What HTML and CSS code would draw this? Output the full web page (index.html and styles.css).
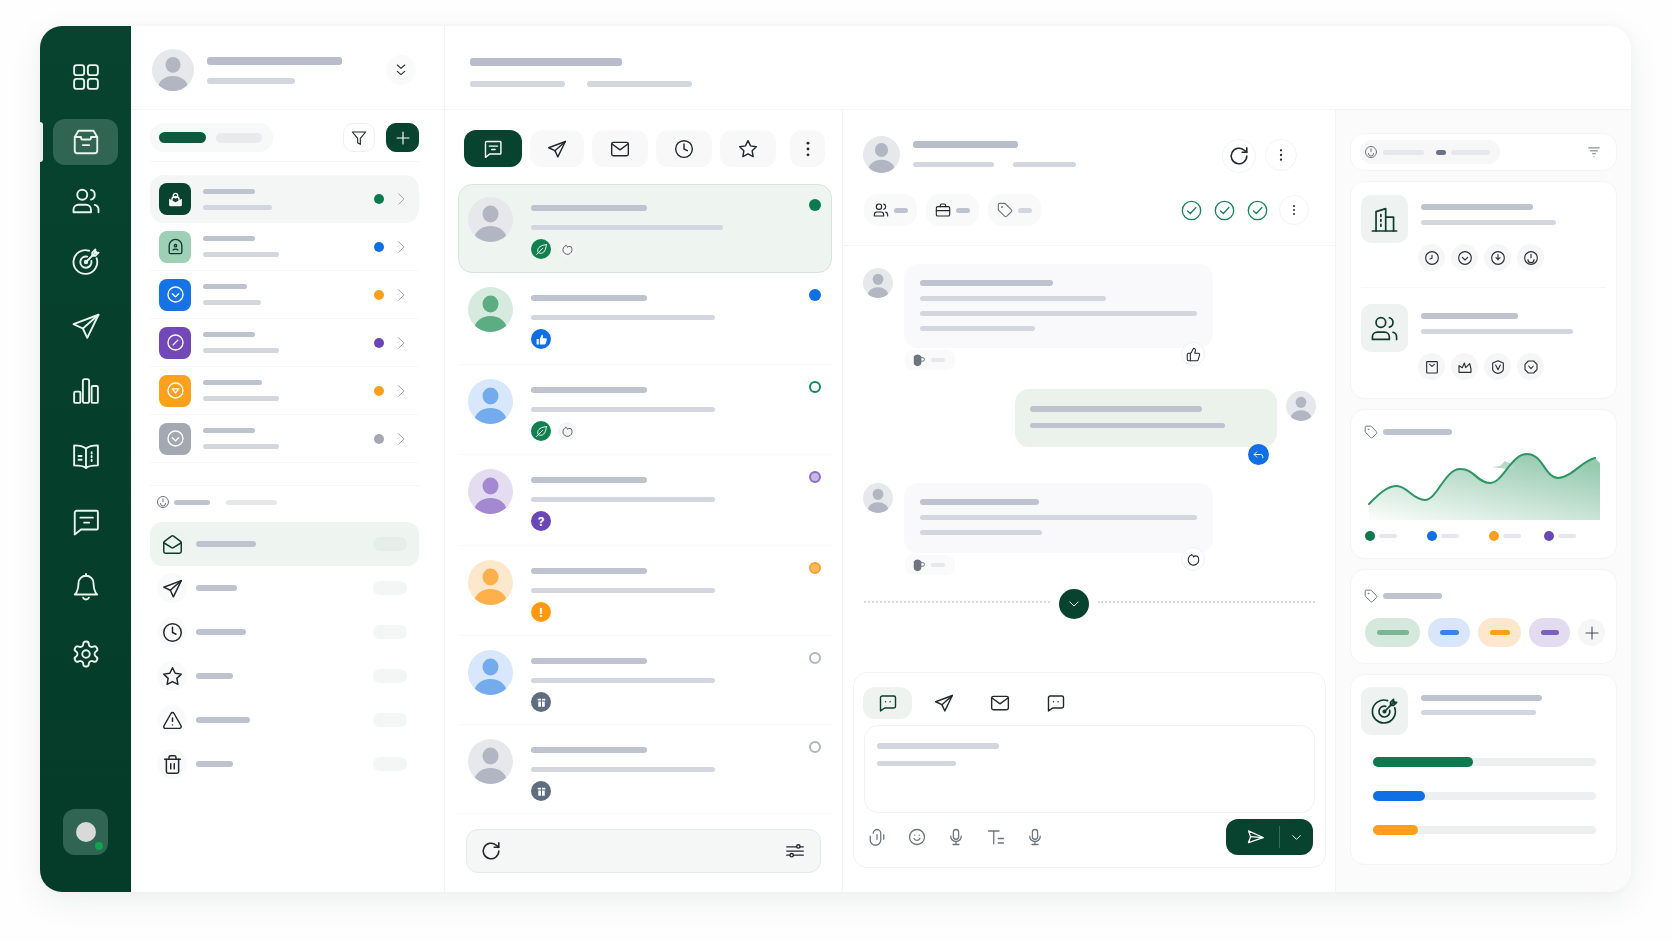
FILE: index.html
```html
<!DOCTYPE html>
<html lang="en">
<head>
  <meta charset="UTF-8">
  <title>Inbox</title>
  <link rel="stylesheet" href="styles.css">
</head>
<body>

<svg class="sprite" xmlns="http://www.w3.org/2000/svg">
  <symbol id="i-grid" viewBox="0 0 24 24"><rect x="2.500" y="2.500" width="8" height="8" rx="2"/><rect x="13.500" y="2.500" width="8" height="8" rx="2"/><rect x="2.500" y="13.500" width="8" height="8" rx="2"/><rect x="13.500" y="13.500" width="8" height="8" rx="2"/></symbol>
  <symbol id="i-inbox" viewBox="0 0 24 24"><path d="M6 3h12l3 5v11a2 2 0 0 1-2 2H5a2 2 0 0 1-2-2V8z"/><path d="M3 8h5v.5A1.500 1.500 0 0 0 9.500 10h5A1.500 1.500 0 0 0 16 8.500V8h5"/><path d="M9.500 14.500h5"/></symbol>
  <symbol id="i-users" viewBox="0 0 24 24"><path d="M16 21v-2a4 4 0 0 0-4-4H6a4 4 0 0 0-4 4v2z"/><circle cx="9" cy="7" r="4"/><path d="M22 21v-2a4 4 0 0 0-3-3.870"/><path d="M16 3.130a4 4 0 0 1 0 7.750"/></symbol>
  <symbol id="i-target" viewBox="0 0 24 24"><path d="M20.500 9a9.500 9.500 0 1 1-6-6"/><path d="M16.300 11a4.500 4.500 0 1 1-3.300-3.300"/><circle cx="12" cy="12" r="1"/><path d="M12 12l8-8"/><path d="M17 4.500V7h2.500L22 4.500h-2.500V2z"/></symbol>
  <symbol id="i-send" viewBox="0 0 24 24"><path d="M22 3 2 10.500l7.500 3.500 3.500 7.500z"/><path d="M9.500 14 22 3"/></symbol>
  <symbol id="i-bars" viewBox="0 0 24 24"><rect x="2.500" y="12.500" width="5" height="9" rx="1"/><rect x="9.500" y="2.500" width="5" height="19" rx="1.500"/><rect x="16.500" y="8" width="5" height="13.500" rx="1"/></symbol>
  <symbol id="i-book" viewBox="0 0 24 24"><path d="M12 6C10 4.300 7 3.500 2.500 3.500v16c4.500 0 7.500.5 9.500 2 2-1.500 5-2 9.500-2v-16C17 3.500 14 4.300 12 6z"/><path d="M12 6v15.500"/><path d="M6 12h2.500M6 15h2.500M16.500 9v1M16.500 12v1M16.500 15v1"/></symbol>
  <symbol id="i-chat" viewBox="0 0 24 24"><path d="M4.500 3h16a1 1 0 0 1 1 1v13a1 1 0 0 1-1 1H8l-5 4V4.500A1.500 1.500 0 0 1 4.500 3z"/><path d="M7.500 8.500h10M10.500 12.500h4"/></symbol>
  <symbol id="i-chat-eyes" viewBox="0 0 24 24"><path d="M5 3.500h14a2 2 0 0 1 2 2V16a2 2 0 0 1-2 2H8l-5 3.500V5.500a2 2 0 0 1 2-2z"/><path d="M9 10.500h.01M14.500 10.500h.01"/></symbol>
  <symbol id="i-bell" viewBox="0 0 24 24"><path d="M6 9a6 6 0 0 1 12 0c0 7 3 9 3 9H3s3-2 3-9"/><path d="M9.700 20.500a2.500 2.500 0 0 0 4.600 0"/><path d="M12 3V1.500"/></symbol>
  <symbol id="i-gear" viewBox="0 0 24 24"><path d="M12.220 2h-.44a2 2 0 0 0-2 2v.18a2 2 0 0 1-1 1.730l-.43.25a2 2 0 0 1-2 0l-.15-.08a2 2 0 0 0-2.730.73l-.22.38a2 2 0 0 0 .73 2.730l.15.1a2 2 0 0 1 1 1.720v.51a2 2 0 0 1-1 1.740l-.15.09a2 2 0 0 0-.73 2.730l.22.38a2 2 0 0 0 2.730.73l.15-.08a2 2 0 0 1 2 0l.43.25a2 2 0 0 1 1 1.730V20a2 2 0 0 0 2 2h.44a2 2 0 0 0 2-2v-.18a2 2 0 0 1 1-1.730l.43-.25a2 2 0 0 1 2 0l.15.08a2 2 0 0 0 2.730-.73l.22-.39a2 2 0 0 0-.73-2.730l-.15-.08a2 2 0 0 1-1-1.740v-.5a2 2 0 0 1 1-1.740l.15-.09a2 2 0 0 0 .73-2.730l-.22-.38a2 2 0 0 0-2.730-.73l-.15.08a2 2 0 0 1-2 0l-.43-.25a2 2 0 0 1-1-1.730V4a2 2 0 0 0-2-2z"/><circle cx="12" cy="12" r="3"/></symbol>
  <symbol id="i-chevrons" viewBox="0 0 24 24"><path d="m6.500 4.500 5.500 5 5.500-5"/><path d="m6.500 14 5.500 5 5.500-5"/></symbol>
  <symbol id="i-right" viewBox="0 0 24 24"><path d="m8 3 9 9-9 9"/></symbol>
  <symbol id="i-down" viewBox="0 0 24 24"><path d="m5 8.500 7 7 7-7"/></symbol>
  <symbol id="i-filter" viewBox="0 0 24 24"><path d="M22 3H2l8 9.500V19l4 2.500v-9z"/></symbol>
  <symbol id="i-plus" viewBox="0 0 24 24"><path d="M12 3v18M3 12h18"/></symbol>
  <symbol id="i-mail-open" viewBox="0 0 24 24"><path d="M21.200 8.400c.5.38.8.97.8 1.600v10a2 2 0 0 1-2 2H4a2 2 0 0 1-2-2V10a2 2 0 0 1 .8-1.600l8-6a2 2 0 0 1 2.400 0z"/><path d="m22 10-8.970 5.700a1.940 1.940 0 0 1-2.060 0L2 10"/></symbol>
  <symbol id="i-clock" viewBox="0 0 24 24"><circle cx="12" cy="12" r="10"/><path d="M12 6v6l4 2"/></symbol>
  <symbol id="i-star" viewBox="0 0 24 24"><path d="m12 2 3.090 6.260L22 9.270l-5 4.870 1.180 6.880L12 17.770l-6.180 3.250L7 14.140 2 9.270l6.910-1.010z"/></symbol>
  <symbol id="i-warn" viewBox="0 0 24 24"><path d="m21.730 18-8-14a2 2 0 0 0-3.480 0l-8 14A2 2 0 0 0 4 21h16a2 2 0 0 0 1.730-3z"/><path d="M12 9v4M12 17h.01"/></symbol>
  <symbol id="i-trash" viewBox="0 0 24 24"><path d="M3 6h18"/><path d="M19 6v14a2 2 0 0 1-2 2H7a2 2 0 0 1-2-2V6"/><path d="M8 6V4a2 2 0 0 1 2-2h4a2 2 0 0 1 2 2v2"/><path d="M10 11v6M14 11v6"/></symbol>
  <symbol id="i-mail" viewBox="0 0 24 24"><rect x="2" y="4" width="20" height="16" rx="2"/><path d="m2.500 6 9.500 7 9.500-7"/></symbol>
  <symbol id="i-refresh" viewBox="0 0 24 24"><path d="M20.500 12a8.500 8.500 0 1 1-2.800-6.300L20.500 8"/><path d="M20.500 3v5h-5"/></symbol>
  <symbol id="i-sliders" viewBox="0 0 24 24"><path d="M2 7h20M2 12h20M2 17h20" stroke-width="1.500"/><circle cx="16" cy="6.500" r="2" class="hole"/><circle cx="8" cy="17" r="2" class="hole"/></symbol>
  <symbol id="i-dots" viewBox="0 0 24 24"><circle cx="12" cy="5" r="1.700" class="solid"/><circle cx="12" cy="12" r="1.700" class="solid"/><circle cx="12" cy="19" r="1.700" class="solid"/></symbol>
  <symbol id="i-bag" viewBox="0 0 24 24"><rect x="2" y="7" width="20" height="14" rx="2"/><path d="M16 7V5a2 2 0 0 0-2-2h-4a2 2 0 0 0-2 2v2"/><path d="M2 13h20"/></symbol>
  <symbol id="i-tag" viewBox="0 0 24 24"><path d="M12.590 2.590A2 2 0 0 0 11.170 2H4a2 2 0 0 0-2 2v7.170a2 2 0 0 0 .59 1.420l8.700 8.700a2.430 2.430 0 0 0 3.420 0l6.580-6.580a2.430 2.430 0 0 0 0-3.420z"/><circle cx="7.500" cy="7.500" r=".6"/></symbol>
  <symbol id="i-check" viewBox="0 0 24 24"><circle cx="12" cy="12" r="10.500"/><path d="m7.500 12.500 3.200 3L17 8.500"/></symbol>
  <symbol id="i-thumb" viewBox="0 0 24 24"><path d="M7 10v12"/><path d="M15 5.880 14 10h5.830a2 2 0 0 1 1.920 2.560l-2.330 8A2 2 0 0 1 17.500 22H4a2 2 0 0 1-2-2v-8a2 2 0 0 1 2-2h2.760a2 2 0 0 0 1.790-1.110L12 2a3.130 3.130 0 0 1 3 3.880z"/></symbol>
  <symbol id="i-thumb-solid" viewBox="0 0 24 24"><path class="solid" d="M3 11h4v10H3zM9 21V11l3.500-8c1.600 0 2.500 1.300 2.200 3L14.500 9.500H20a2 2 0 0 1 1.900 2.500l-2 7.500A2 2 0 0 1 18 21z"/></symbol>
  <symbol id="i-blob" viewBox="0 0 24 24"><path d="M9 4.500a8.500 8.500 0 1 0 9.500 2.500"/><path d="M9 4.500c2 .5 3 1.800 3 3.500 1.500-1.800 3.500-2.500 6.500-1"/></symbol>
  <symbol id="i-leaf" viewBox="0 0 24 24"><path d="M21 3C11 4 5 8 5 14c0 1.500.5 3 1.500 4 1 .8 2.500 1 4 1 6 0 9.500-6 10.500-16z"/><path d="M3 21 14 10"/></symbol>
  <symbol id="i-gift" viewBox="0 0 24 24"><path class="solid" d="M6 10h5v10H7a1 1 0 0 1-1-1zM13 10h5v9a1 1 0 0 1-1 1h-4zM5 5h6v3.500H5zM13 5h6v3.500h-6z"/></symbol>
  <symbol id="i-reply" viewBox="0 0 24 24"><path d="M9 17 4 12l5-5"/><path d="M4 12h12a4 4 0 0 1 4 4v2"/></symbol>
  <symbol id="i-mug" viewBox="0 0 24 24"><path class="solid" d="M3 6a8 8 0 0 1 13 0v10a6 6 0 0 1-13 0z"/><path d="M16 8h2.500a3 3 0 0 1 0 6H16"/></symbol>
  <symbol id="i-clip" viewBox="0 0 24 24"><path d="M7 7a5 5 0 0 1 10 0v9a7 7 0 0 1-14 0v-5"/><path d="M12 9v6"/><path d="M21 9v6"/></symbol>
  <symbol id="i-smile" viewBox="0 0 24 24"><circle cx="12" cy="12" r="10"/><path d="M8 14s1.500 2.500 4 2.500 4-2.500 4-2.500M9 9.500h.01M15 9.500h.01"/></symbol>
  <symbol id="i-mic" viewBox="0 0 24 24"><rect x="8.500" y="2" width="7" height="13" rx="3.500"/><path d="M19 11a7 7 0 0 1-14 0M12 18v4M8 22h8"/></symbol>
  <symbol id="i-text" viewBox="0 0 24 24"><path d="M2 4h14M9 4v17M15 14h7M15 20h7"/></symbol>
  <symbol id="i-building" viewBox="0 0 24 24"><path d="M2 21.500h20"/><path d="M5 21.500V5.500L13 3v18.500"/><path d="M13 10h6.500v11.500"/><path d="M9 8v1.500M9 12v1.500M9 16v1.500"/></symbol>
  <symbol id="i-lines" viewBox="0 0 24 24"><path d="M3 5h18M6 10h12M9.500 15h5M12 20h.01"/></symbol>
  <symbol id="i-letter" viewBox="0 0 24 24"><path class="solid" d="M4 11l3 1.500 5 3 5-3 3-1.500v8a1.500 1.500 0 0 1-1.500 1.500h-13A1.500 1.500 0 0 1 4 19z"/><circle cx="12" cy="7" r="2.800"/><path d="M7.500 13v-1.500a4.500 3 0 0 1 9 0V13"/></symbol>
  <symbol id="i-arch" viewBox="0 0 24 24"><path d="M6 21a2 2 0 0 1-2-2v-8a8 8 0 0 1 16 0v8a2 2 0 0 1-2 2z"/><circle cx="12" cy="11" r="1.500"/><path d="M9 16.500c.5-1.500 5.500-1.500 6 0"/></symbol>
  <symbol id="c-chev" viewBox="0 0 24 24"><circle cx="12" cy="12" r="9.500"/><path d="m8 11 4 4 4-4"/></symbol>
  <symbol id="c-gauge" viewBox="0 0 24 24"><circle cx="12" cy="12" r="9.500"/><path d="m9 15 6-6"/></symbol>
  <symbol id="c-wifi" viewBox="0 0 24 24"><circle cx="12" cy="12" r="9.500"/><path d="M8 10h8l-4 5z"/></symbol>
  <symbol id="c-time" viewBox="0 0 24 24"><circle cx="12" cy="12" r="9.500"/><path d="M12 8v4.500l-3 1"/></symbol>
  <symbol id="c-drop" viewBox="0 0 24 24"><circle cx="12" cy="12" r="9.500"/><path d="M12 7v7M9 11.500l3 3 3-3"/></symbol>
  <symbol id="c-up" viewBox="0 0 24 24"><circle cx="12" cy="12" r="9.500"/><path d="M7.500 14.500a4.500 4.500 0 0 0 9 0M12 6.500v5"/></symbol>
  <symbol id="c-clipboard" viewBox="0 0 24 24"><path d="M5 4h14a1 1 0 0 1 1 1v15a1 1 0 0 1-1 1H5a1 1 0 0 1-1-1V5a1 1 0 0 1 1-1z"/><path d="m8.500 8 3.500 3 3.500-3"/></symbol>
  <symbol id="c-spark" viewBox="0 0 24 24"><path d="M3 20V10l5 3 3-7 2 7 6-6 2 8v5z"/></symbol>
  <symbol id="c-shield" viewBox="0 0 24 24"><path d="M12 2.500 20 6v9c0 3-3 5.500-8 6.500-5-1-8-3.500-8-6.500V6z"/><path d="m8.500 9 3.500 7 3.500-7"/></symbol>
  <symbol id="c-hex" viewBox="0 0 24 24"><path d="M8 3h8l5 5v8l-5 5H8l-5-5V8z"/><path d="m8.500 10.500 3.500 4 3.500-4"/></symbol>
  <symbol id="avatar" viewBox="0 0 45 45"><ellipse class="solid" cx="22.500" cy="17" rx="8" ry="8.500"/><ellipse class="solid" cx="22.500" cy="41.500" rx="16" ry="12.500"/></symbol>
</svg>

<div class="app">
  <aside class="rail">
    <nav class="rail-nav">
      <a class="rail-item"><svg class="ic"><use href="#i-grid"/></svg></a>
      <a class="rail-item active"><svg class="ic"><use href="#i-inbox"/></svg></a>
      <a class="rail-item"><svg class="ic"><use href="#i-users"/></svg></a>
      <a class="rail-item"><svg class="ic"><use href="#i-target"/></svg></a>
      <a class="rail-item"><svg class="ic"><use href="#i-send"/></svg></a>
      <a class="rail-item"><svg class="ic"><use href="#i-bars"/></svg></a>
      <a class="rail-item"><svg class="ic"><use href="#i-book"/></svg></a>
      <a class="rail-item"><svg class="ic"><use href="#i-chat"/></svg></a>
      <a class="rail-item"><svg class="ic"><use href="#i-bell"/></svg></a>
      <a class="rail-item"><svg class="ic"><use href="#i-gear"/></svg></a>
    </nav>
    <div class="rail-user"><span class="rail-face"></span><span class="rail-online"></span></div>
  </aside>

  <section class="folders">
    <header class="folders-head">
      <span class="avatar a42 grey"><svg><use href="#avatar"/></svg></span>
      <div class="stack gap12">
        <span class="bar dark h8 w135"></span>
        <span class="bar h6 w88"></span>
      </div>
      <span class="round-btn"><svg class="ic16"><use href="#i-chevrons"/></svg></span>
    </header>

    <div class="folders-body">
      <div class="tool-row">
        <div class="seg">
          <span class="seg-on"></span>
          <span class="seg-off"></span>
        </div>
        <span class="square-btn"><svg class="ic16"><use href="#i-filter"/></svg></span>
        <span class="square-btn primary"><svg class="ic16"><use href="#i-plus"/></svg></span>
      </div>

      <ul class="groups">
        <li class="group on">
          <span class="tile t-dark"><svg class="ic19"><use href="#i-letter"/></svg></span>
          <div class="stack gap11"><span class="bar mid w52"></span><span class="bar w69"></span></div>
          <span class="dot green"></span><svg class="chev"><use href="#i-right"/></svg>
        </li>
        <li class="group">
          <span class="tile t-mint"><svg class="ic19"><use href="#i-arch"/></svg></span>
          <div class="stack gap11"><span class="bar mid w52"></span><span class="bar w76"></span></div>
          <span class="dot blue"></span><svg class="chev"><use href="#i-right"/></svg>
        </li>
        <li class="group">
          <span class="tile t-blue"><svg class="ic19"><use href="#c-chev"/></svg></span>
          <div class="stack gap11"><span class="bar mid w44"></span><span class="bar w58"></span></div>
          <span class="dot orange"></span><svg class="chev"><use href="#i-right"/></svg>
        </li>
        <li class="group">
          <span class="tile t-purple"><svg class="ic19"><use href="#c-gauge"/></svg></span>
          <div class="stack gap11"><span class="bar mid w52"></span><span class="bar w76"></span></div>
          <span class="dot purple"></span><svg class="chev"><use href="#i-right"/></svg>
        </li>
        <li class="group">
          <span class="tile t-orange"><svg class="ic19"><use href="#c-wifi"/></svg></span>
          <div class="stack gap11"><span class="bar mid w59"></span><span class="bar w76"></span></div>
          <span class="dot orange"></span><svg class="chev"><use href="#i-right"/></svg>
        </li>
        <li class="group">
          <span class="tile t-grey"><svg class="ic19"><use href="#c-chev"/></svg></span>
          <div class="stack gap11"><span class="bar mid w52"></span><span class="bar w76"></span></div>
          <span class="dot grey-dot"></span><svg class="chev"><use href="#i-right"/></svg>
        </li>
      </ul>

      <div class="sub-head">
        <svg class="ic14 soft"><use href="#c-up"/></svg>
        <span class="bar mid w36"></span>
        <span class="bar pale w51"></span>
      </div>

      <ul class="folders-list">
        <li class="folder on"><span class="folder-ic"><svg class="ic21"><use href="#i-mail-open"/></svg></span><span class="bar mid h6 w60"></span><span class="count"></span></li>
        <li class="folder"><span class="folder-ic"><svg class="ic21"><use href="#i-send"/></svg></span><span class="bar mid h6 w41"></span><span class="count"></span></li>
        <li class="folder"><span class="folder-ic"><svg class="ic21"><use href="#i-clock"/></svg></span><span class="bar mid h6 w50"></span><span class="count"></span></li>
        <li class="folder"><span class="folder-ic"><svg class="ic21"><use href="#i-star"/></svg></span><span class="bar mid h6 w37"></span><span class="count"></span></li>
        <li class="folder"><span class="folder-ic"><svg class="ic21"><use href="#i-warn"/></svg></span><span class="bar mid h6 w54"></span><span class="count"></span></li>
        <li class="folder"><span class="folder-ic"><svg class="ic21"><use href="#i-trash"/></svg></span><span class="bar mid h6 w37"></span><span class="count"></span></li>
      </ul>
    </div>
  </section>

  <div class="workspace">
    <header class="top">
      <span class="bar dark h8 w152"></span>
      <div class="top-sub"><span class="bar h6 w95"></span><span class="bar h6 w105"></span></div>
    </header>

    <div class="panes">
      <section class="threads">
        <div class="thread-tabs">
          <span class="tab on"><svg class="ic20"><use href="#i-chat"/></svg></span>
          <span class="tab w54"><svg class="ic20"><use href="#i-send"/></svg></span>
          <span class="tab"><svg class="ic20"><use href="#i-mail"/></svg></span>
          <span class="tab"><svg class="ic20"><use href="#i-clock"/></svg></span>
          <span class="tab"><svg class="ic20"><use href="#i-star"/></svg></span>
          <span class="tab more"><svg class="ic20"><use href="#i-dots"/></svg></span>
        </div>

        <ul class="thread-list">
          <li class="thread on">
            <span class="avatar a45 grey"><svg><use href="#avatar"/></svg></span>
            <div class="thread-body">
              <span class="bar mid h6 w116"></span>
              <span class="bar w192"></span>
              <div class="badges"><span class="badge b-green"><svg class="ic13"><use href="#i-leaf"/></svg></span><span class="badge-soft"><svg class="ic13"><use href="#i-blob"/></svg></span></div>
            </div>
            <span class="flag green"></span>
          </li>
          <li class="thread">
            <span class="avatar a45 mint"><svg><use href="#avatar"/></svg></span>
            <div class="thread-body">
              <span class="bar mid h6 w116"></span>
              <span class="bar w184"></span>
              <div class="badges"><span class="badge b-blue"><svg class="ic13"><use href="#i-thumb-solid"/></svg></span></div>
            </div>
            <span class="flag blue"></span>
          </li>
          <li class="thread">
            <span class="avatar a45 sky"><svg><use href="#avatar"/></svg></span>
            <div class="thread-body">
              <span class="bar mid h6 w116"></span>
              <span class="bar w184"></span>
              <div class="badges"><span class="badge b-green"><svg class="ic13"><use href="#i-leaf"/></svg></span><span class="badge-soft"><svg class="ic13"><use href="#i-blob"/></svg></span></div>
            </div>
            <span class="flag ring-green"></span>
          </li>
          <li class="thread">
            <span class="avatar a45 lilac"><svg><use href="#avatar"/></svg></span>
            <div class="thread-body">
              <span class="bar mid h6 w116"></span>
              <span class="bar w184"></span>
              <div class="badges"><span class="badge b-purple">?</span></div>
            </div>
            <span class="flag ring-purple"></span>
          </li>
          <li class="thread">
            <span class="avatar a45 peach"><svg><use href="#avatar"/></svg></span>
            <div class="thread-body">
              <span class="bar mid h6 w116"></span>
              <span class="bar w184"></span>
              <div class="badges"><span class="badge b-orange">!</span></div>
            </div>
            <span class="flag ring-orange"></span>
          </li>
          <li class="thread">
            <span class="avatar a45 sky"><svg><use href="#avatar"/></svg></span>
            <div class="thread-body">
              <span class="bar mid h6 w116"></span>
              <span class="bar w184"></span>
              <div class="badges"><span class="badge b-slate"><svg class="ic13"><use href="#i-gift"/></svg></span></div>
            </div>
            <span class="flag ring-grey"></span>
          </li>
          <li class="thread">
            <span class="avatar a45 grey"><svg><use href="#avatar"/></svg></span>
            <div class="thread-body">
              <span class="bar mid h6 w116"></span>
              <span class="bar w184"></span>
              <div class="badges"><span class="badge b-slate"><svg class="ic13"><use href="#i-gift"/></svg></span></div>
            </div>
            <span class="flag ring-grey"></span>
          </li>
        </ul>

        <div class="search">
          <svg class="ic22"><use href="#i-refresh"/></svg>
          <svg class="ic20"><use href="#i-sliders"/></svg>
        </div>
      </section>

      <section class="chat">
        <header class="chat-head">
          <div class="chat-who">
            <span class="avatar a37 grey"><svg><use href="#avatar"/></svg></span>
            <div class="stack who-text">
              <span class="bar dark h7 w105"></span>
              <div class="who-sub"><span class="bar w81"></span><span class="bar w63"></span></div>
            </div>
            <span class="circle-btn big"><svg class="ic22"><use href="#i-refresh"/></svg></span>
            <span class="circle-btn"><svg class="ic16"><use href="#i-dots"/></svg></span>
          </div>
          <div class="chat-meta">
            <span class="pill"><svg class="ic16"><use href="#i-users"/></svg><i class="bar mid w14"></i></span>
            <span class="pill"><svg class="ic16"><use href="#i-bag"/></svg><i class="bar mid w14"></i></span>
            <span class="pill"><svg class="ic16 soft"><use href="#i-tag"/></svg><i class="bar w14"></i></span>
            <div class="checks">
              <svg class="ic21 tick"><use href="#i-check"/></svg>
              <svg class="ic21 tick"><use href="#i-check"/></svg>
              <svg class="ic21 tick"><use href="#i-check"/></svg>
              <span class="circle-btn small"><svg class="ic14"><use href="#i-dots"/></svg></span>
            </div>
          </div>
        </header>

        <div class="messages">
          <div class="msg">
            <span class="avatar a30 grey"><svg><use href="#avatar"/></svg></span>
            <div>
              <div class="bubble b-in h84">
                <span class="bar mid h6 w133"></span>
                <span class="bar w186"></span>
                <span class="bar w277"></span>
                <span class="bar w115"></span>
                <span class="react-btn"><svg class="ic15"><use href="#i-thumb"/></svg></span>
              </div>
              <div class="react-chip"><svg class="ic14 soft"><use href="#i-mug"/></svg><i class="bar pale h4 w14"></i></div>
            </div>
          </div>

          <div class="msg mine">
            <div class="bubble b-out">
              <span class="bar mid h6 w172"></span>
              <span class="bar mid w195"></span>
              <span class="reply-btn"><svg class="ic13"><use href="#i-reply"/></svg></span>
            </div>
            <span class="avatar a30 grey"><svg><use href="#avatar"/></svg></span>
          </div>

          <div class="msg third">
            <span class="avatar a30 grey"><svg><use href="#avatar"/></svg></span>
            <div>
              <div class="bubble b-in h70">
                <span class="bar mid h6 w119"></span>
                <span class="bar w277"></span>
                <span class="bar w122"></span>
                <span class="react-btn"><svg class="ic15"><use href="#i-blob"/></svg></span>
              </div>
              <div class="react-chip"><svg class="ic14 soft"><use href="#i-mug"/></svg><i class="bar pale h4 w14"></i></div>
            </div>
          </div>

          <div class="jump">
            <span class="jump-line short"></span>
            <span class="jump-btn"><svg class="ic14"><use href="#i-down"/></svg></span>
            <span class="jump-line"></span>
          </div>
        </div>

        <div class="composer">
          <div class="composer-tabs">
            <span class="ctab on"><svg class="ic20"><use href="#i-chat-eyes"/></svg></span>
            <span class="ctab"><svg class="ic20"><use href="#i-send"/></svg></span>
            <span class="ctab"><svg class="ic20"><use href="#i-mail"/></svg></span>
            <span class="ctab"><svg class="ic20"><use href="#i-chat-eyes"/></svg></span>
          </div>
          <div class="field">
            <span class="bar h6 w122"></span>
            <span class="bar w79"></span>
          </div>
          <div class="composer-foot">
            <svg class="ic18 soft"><use href="#i-clip"/></svg>
            <svg class="ic18 soft"><use href="#i-smile"/></svg>
            <svg class="ic18 soft"><use href="#i-mic"/></svg>
            <svg class="ic18 soft"><use href="#i-text"/></svg>
            <svg class="ic18 soft"><use href="#i-mic"/></svg>
            <div class="send">
              <span class="send-main"><svg class="ic18 tilt"><use href="#i-send"/></svg></span>
              <span class="send-more"><svg class="ic13"><use href="#i-down"/></svg></span>
            </div>
          </div>
        </div>
      </section>

      <aside class="details">
        <div class="card filter-card">
          <div class="filter-pill">
            <svg class="ic14 soft"><use href="#c-up"/></svg>
            <span class="bar pale w41"></span>
            <span class="bar slate w10"></span>
            <span class="bar pale w39"></span>
          </div>
          <svg class="ic14 soft"><use href="#i-lines"/></svg>
        </div>

        <div class="card info-card">
          <div class="info-block">
            <span class="big-tile"><svg class="ic29"><use href="#i-building"/></svg></span>
            <div class="stack info-text">
              <span class="bar mid h6 w112"></span>
              <span class="bar w135"></span>
              <div class="mini-row">
                <span class="mini"><svg class="ic16"><use href="#c-time"/></svg></span>
                <span class="mini"><svg class="ic16"><use href="#c-chev"/></svg></span>
                <span class="mini"><svg class="ic16"><use href="#c-drop"/></svg></span>
                <span class="mini"><svg class="ic16"><use href="#c-up"/></svg></span>
              </div>
            </div>
          </div>
          <div class="info-block second">
            <span class="big-tile"><svg class="ic29"><use href="#i-users"/></svg></span>
            <div class="stack info-text">
              <span class="bar mid h6 w97"></span>
              <span class="bar w152"></span>
              <div class="mini-row">
                <span class="mini"><svg class="ic16"><use href="#c-clipboard"/></svg></span>
                <span class="mini"><svg class="ic16"><use href="#c-spark"/></svg></span>
                <span class="mini"><svg class="ic16"><use href="#c-shield"/></svg></span>
                <span class="mini"><svg class="ic16"><use href="#c-hex"/></svg></span>
              </div>
            </div>
          </div>
        </div>

        <div class="card chart-card">
          <div class="card-title"><svg class="ic14 soft"><use href="#i-tag"/></svg><span class="bar mid h6 w69"></span></div>
          <svg class="chart" viewBox="0 0 235 72">
            <defs>
              <linearGradient id="area" x1="0" y1="1" x2="0.75" y2="0">
                <stop offset="0" stop-color="#3f9e6c" stop-opacity=".02"/>
                <stop offset="1" stop-color="#3f9e6c" stop-opacity=".55"/>
              </linearGradient>
            </defs>
            <path class="chart-area" fill="url(#area)" d="M4 56C14 46 22 38 32 38S48 52 60 52 80 21 95 21 112 35 125 35 146 6 162 6 180 30 193 30 218 12 230 10L235 15V72H4Z"/>
            <path class="chart-mark" d="M127 19l8-1 5-5 6 3 4 4-8 1z"/>
            <path class="chart-line" d="M4 56C14 46 22 38 32 38S48 52 60 52 80 21 95 21 112 35 125 35 146 6 162 6 180 30 193 30 218 12 230 10"/>
          </svg>
          <div class="legend">
            <span class="legend-item"><i class="mark green"></i><i class="bar pale h4 w18"></i></span>
            <span class="legend-item"><i class="mark blue"></i><i class="bar pale h4 w18"></i></span>
            <span class="legend-item"><i class="mark orange"></i><i class="bar pale h4 w18"></i></span>
            <span class="legend-item"><i class="mark purple"></i><i class="bar pale h4 w18"></i></span>
          </div>
        </div>

        <div class="card tags-card">
          <div class="card-title"><svg class="ic14 soft"><use href="#i-tag"/></svg><span class="bar mid h6 w59"></span></div>
          <div class="chips">
            <span class="chip c-green w55"><i class="w32"></i></span>
            <span class="chip c-blue w42"><i class="w19"></i></span>
            <span class="chip c-orange w43"><i class="w20"></i></span>
            <span class="chip c-purple w41"><i class="w18"></i></span>
            <span class="chip-add"><svg class="ic16"><use href="#i-plus"/></svg></span>
          </div>
        </div>

        <div class="card goal-card">
          <div class="goal-head">
            <span class="big-tile"><svg class="ic29"><use href="#i-target"/></svg></span>
            <div class="stack goal-text"><span class="bar mid h6 w121"></span><span class="bar w115"></span></div>
          </div>
          <div class="progress"><span class="fill green w100"></span></div>
          <div class="progress"><span class="fill blue w52"></span></div>
          <div class="progress"><span class="fill orange w45"></span></div>
        </div>
      </aside>
    </div>
  </div>
</div>

</body>
</html>
```

FILE: styles.css
```css
* { box-sizing: border-box; margin: 0; padding: 0; }

body {
  background: #fefefe;
  font-family: "Inter", "Liberation Sans", sans-serif;
  height: 941px;
  overflow: hidden;
  padding: 26px 41px 49px 40px;
}

ul { list-style: none; }
i { display: block; }

.sprite { display: none; }

/* svg defaults, line icons */
svg { display: block; fill: none; stroke: currentColor; stroke-width: 1.7; stroke-linecap: round; stroke-linejoin: round; flex: none; }
.solid { fill: currentColor; stroke: none; }
.hole { fill: #f5f6f6; }

.ic { width: 30px; height: 30px; stroke-width: 1.5; }
.ic13 { width: 13px; height: 13px; }
.ic14 { width: 14px; height: 14px; }
.ic15 { width: 15px; height: 15px; }
.ic16 { width: 16px; height: 16px; }
.ic18 { width: 18px; height: 18px; }
.ic19 { width: 19px; height: 19px; }
.ic20 { width: 20px; height: 20px; }
.ic21 { width: 21px; height: 21px; }
.ic22 { width: 22px; height: 22px; }
.ic29 { width: 29px; height: 29px; stroke-width: 1.4; }
.soft { color: #6f7480; }
.tilt { transform: rotate(45deg); }

.app {
  display: flex;
  height: 866px;
  width: 1591px;
  background: #fff;
  border-radius: 22px;
  overflow: hidden;
  box-shadow: 0 10px 34px rgba(30, 40, 60, .07), 0 0 8px rgba(30, 40, 60, .03);
}

/* skeleton text */
.bar { display: block; height: 5px; border-radius: 3px; background: #d4d6df; flex: none; }
.bar.mid { background: #bfc2cf; }
.bar.dark { background: #b9bcca; }
.bar.pale { background: #e6e7ea; }
.bar.slate { background: #6c7388; }
.h4 { height: 4px; }
.h6 { height: 6px; }
.h7 { height: 7px; }
.h8 { height: 8px; }

.w10 { width: 10px; } .w14 { width: 14px; } .w18 { width: 18px; } .w19 { width: 19px; }
.w20 { width: 20px; } .w32 { width: 32px; } .w36 { width: 36px; } .w37 { width: 37px; }
.w39 { width: 39px; } .w41 { width: 41px; } .w42 { width: 42px; } .w43 { width: 43px; }
.w44 { width: 44px; } .w45 { width: 45px; } .w50 { width: 50px; } .w51 { width: 51px; }
.w52 { width: 52px; } .w54 { width: 54px; } .w55 { width: 55px; } .w58 { width: 58px; }
.w59 { width: 59px; } .w60 { width: 60px; } .w63 { width: 63px; } .w69 { width: 69px; }
.w76 { width: 76px; } .w79 { width: 79px; } .w81 { width: 81px; } .w88 { width: 88px; }
.w95 { width: 95px; } .w97 { width: 97px; } .w100 { width: 100px; } .w105 { width: 105px; }
.w112 { width: 112px; } .w115 { width: 115px; } .w116 { width: 116px; } .w119 { width: 119px; }
.w121 { width: 121px; } .w122 { width: 122px; } .w133 { width: 133px; } .w135 { width: 135px; }
.w152 { width: 152px; } .w172 { width: 172px; } .w184 { width: 184px; } .w186 { width: 186px; }
.w192 { width: 192px; } .w195 { width: 195px; } .w277 { width: 277px; }

.stack { display: flex; flex-direction: column; }
.gap11 { gap: 11px; }
.gap12 { gap: 13px; }

/* avatars */
.avatar { display: block; border-radius: 50%; overflow: hidden; flex: none; }
.avatar svg { width: 100%; height: 100%; }
.a30 { width: 30px; height: 30px; }
.a37 { width: 37px; height: 37px; }
.a42 { width: 42px; height: 42px; }
.a45 { width: 45px; height: 45px; }
.avatar.grey { background: #e7e8eb; color: #b2b6c2; }
.avatar.mint { background: #d7eadf; color: #5cad82; }
.avatar.sky { background: #d8e7fb; color: #74abed; }
.avatar.lilac { background: #e4dcf1; color: #a488d2; }
.avatar.peach { background: #fde8cd; color: #ffb04a; }

/* left rail */
.rail {
  width: 91px;
  flex: none;
  display: flex;
  flex-direction: column;
  align-items: center;
  padding: 28px 0 37px;
  background: linear-gradient(180deg, #07432f, #043b29);
  color: #eaf3ee;
  position: relative;
}
.rail-nav {
  display: grid;
  grid-template-rows: 65px 59px 61px 64px 65px 65px 66px 65px 67px 46px;
  justify-items: center;
}
.rail-item {
  width: 65px;
  height: 46px;
  display: flex;
  align-items: center;
  justify-content: center;
  border-radius: 12px;
}
.rail-item.active { background: #2f6552; }
.rail-item.active::before {
  content: "";
  position: absolute;
  left: 0;
  width: 3px;
  height: 40px;
  background: #e9efec;
  border-radius: 0 3px 3px 0;
}
.rail-user {
  margin-top: auto;
  width: 45px;
  height: 46px;
  border-radius: 12px;
  background: #2f6552;
  display: flex;
  align-items: center;
  justify-content: center;
  position: relative;
}
.rail-face { width: 20px; height: 20px; border-radius: 50%; background: #d9d9d9; }
.rail-online {
  position: absolute;
  right: 5px;
  bottom: 5px;
  width: 8px;
  height: 8px;
  border-radius: 50%;
  background: #12a150;
}

/* folders column */
.folders { width: 314px; flex: none; border-right: 1px solid #f2f3f5; }
.folders-head {
  height: 84px;
  display: flex;
  align-items: center;
  gap: 13px;
  padding: 5px 28px 0 21px;
  border-bottom: 1px solid #f3f4f6;
}
.round-btn {
  margin-left: auto;
  width: 30px;
  height: 30px;
  border-radius: 50%;
  background: #fafafb;
  color: #2b2f38;
  display: flex;
  align-items: center;
  justify-content: center;
}
.folders-body { padding: 13px 25px 0 19px; }

.tool-row {
  display: flex;
  gap: 11px;
  padding-bottom: 9px;
  border-bottom: 1px solid #f3f4f6;
}
.seg {
  width: 123px;
  height: 29px;
  margin-right: auto;
  background: #f7f8f8;
  border-radius: 14px;
  display: flex;
  align-items: center;
  gap: 10px;
  padding-left: 9px;
}
.seg-on { width: 47px; height: 11px; border-radius: 6px; background: #0f5a3e; }
.seg-off { width: 46px; height: 10px; border-radius: 5px; background: #e9eaec; }
.square-btn {
  width: 32px;
  height: 29px;
  border-radius: 10px;
  border: 1px solid #f0f0f2;
  background: #fff;
  color: #23272f;
  display: flex;
  align-items: center;
  justify-content: center;
}
.square-btn.primary { width: 33px; background: #07432f; border-color: #07432f; color: #fff; }

.groups { margin-top: 13px; }
.group {
  height: 48px;
  display: flex;
  align-items: center;
  gap: 12px;
  padding: 0 11px 0 9px;
  border-bottom: 1px solid #f7f8f9;
}
.group.on { background: #f4f6f5; border-radius: 14px; border-bottom: 0; }
.group .dot { margin-left: auto; }
.dot { width: 10px; height: 10px; border-radius: 50%; flex: none; }
.chev { width: 14px; height: 14px; margin-left: -2px; color: #9a9da6; stroke-width: 1.6; }

.tile {
  width: 32px;
  height: 32px;
  border-radius: 8px;
  flex: none;
  display: flex;
  align-items: center;
  justify-content: center;
  color: #fff;
}
.t-dark { background: #07432f; }
.t-mint { background: #9fd0b6; color: #0c3b2b; }
.t-blue { background: #1673e6; }
.t-purple { background: #7248b8; }
.t-orange { background: #ffa01e; }
.t-grey { background: #a4a8b3; }

.green { background: #0c7a4d; }
.blue { background: #0f6fe3; }
.orange { background: #ff9f1c; }
.purple { background: #6b46b5; }
.grey-dot { background: #a5a8b3; }

.sub-head {
  margin-top: 22px;
  padding: 9px 0 13px 6px;
  border-top: 1px solid #f3f4f6;
  display: flex;
  align-items: center;
  gap: 4px;
}
.sub-head .bar + .bar { margin-left: 12px; }

.folder {
  height: 44px;
  display: flex;
  align-items: center;
  gap: 9px;
  padding: 0 12px 0 7px;
  border-radius: 12px;
}
.folder.on { background: #eef5f1; }
.folder-ic {
  width: 30px;
  height: 30px;
  border-radius: 50%;
  background: #fafafb;
  color: #23272f;
  display: flex;
  align-items: center;
  justify-content: center;
}
.folder.on .folder-ic { background: #edf4f0; color: #0d3d2c; }
.count { margin-left: auto; width: 34px; height: 14px; border-radius: 7px; background: #f4f5f5; }
.folder.on .count { background: #e4efe9; }

/* main area */
.workspace { flex: 1; display: flex; flex-direction: column; min-width: 0; }
.top { height: 84px; padding: 32px 0 0 25px; border-bottom: 1px solid #f3f4f6; }
.top-sub { display: flex; gap: 22px; margin-top: 15px; }
.panes { flex: 1; display: flex; min-height: 0; }

/* thread list */
.threads {
  width: 398px;
  flex: none;
  display: flex;
  flex-direction: column;
  padding-top: 20px;
  border-right: 1px solid #f2f3f5;
}
.thread-tabs { display: flex; gap: 8px; padding: 0 17px 0 19px; }
.tab {
  width: 56px;
  height: 37px;
  border-radius: 12px;
  background: #f8f8f9;
  color: #23272f;
  display: flex;
  align-items: center;
  justify-content: center;
}
.tab.w54 { width: 54px; }
.tab.on { width: 58px; background: #07432f; color: #fff; }
.tab.more { width: 35px; margin-left: auto; }

.thread-list { margin: 17px 10px 0 13px; }
.thread {
  height: 90px;
  display: flex;
  align-items: flex-start;
  padding: 14px 11px 0 10px;
  border-bottom: 1px solid #f9f9fa;
}
.thread.on {
  height: 89px;
  padding: 12px 10px 0 9px;
  background: #eef4f0;
  border: 1px solid #d5e5dc;
  border-radius: 14px;
}
.thread:nth-child(2) { height: 92px; }
.thread:nth-child(4) { height: 91px; }
.thread:nth-child(6) { height: 89px; }
.thread:nth-child(7) { height: 89px; }
.thread-body { flex: 1; margin-left: 18px; padding-top: 8px; display: flex; flex-direction: column; gap: 14px; }
.badges { display: flex; align-items: center; gap: 7px; margin-top: -5px; }
.badge {
  width: 20px;
  height: 20px;
  border-radius: 50%;
  display: flex;
  align-items: center;
  justify-content: center;
  color: #fff;
  font-size: 12px;
  font-weight: 700;
}
.b-green { background: #11804f; }
.b-blue { background: #0f6fe3; }
.b-purple { background: #6b46b5; }
.b-orange { background: #ff9a0e; }
.b-slate { background: #5f6d80; }
.badge-soft {
  width: 18px;
  height: 18px;
  border-radius: 50%;
  background: #f3f5f4;
  color: #555b63;
  display: flex;
  align-items: center;
  justify-content: center;
}
.flag { width: 12px; height: 12px; border-radius: 50%; margin-top: 2px; flex: none; }
.ring-green { border: 2px solid #14885a; }
.ring-purple { background: #c9b8e6; border: 2px solid #8c6fc8; }
.ring-orange { background: #ffbb5c; border: 2px solid #f9a133; }
.ring-grey { border: 2px solid #b3b6bf; }

.search {
  margin: 15px 21px 0;
  height: 44px;
  display: flex;
  align-items: center;
  justify-content: space-between;
  padding: 0 15px 0 13px;
  background: #f5f6f6;
  border: 1px solid #e6e8e9;
  border-radius: 12px;
  color: #23272f;
}

/* conversation */
.chat { width: 493px; flex: none; display: flex; flex-direction: column; border-right: 1px solid #f2f3f5; }
.chat-head { padding: 26px 26px 19px 20px; border-bottom: 1px solid #f3f4f6; }
.chat-who { display: flex; align-items: flex-start; }
.who-text { margin-left: 13px; margin-right: auto; gap: 14px; padding-top: 5px; }
.who-sub { display: flex; gap: 19px; }
.circle-btn {
  width: 32px;
  height: 32px;
  margin-top: 3px;
  border-radius: 50%;
  background: #fff;
  border: 1px solid #f2f3f4;
  color: #23272f;
  display: flex;
  align-items: center;
  justify-content: center;
  margin-right: 12px;
}
.circle-btn.big { width: 34px; height: 34px; margin-right: 9px; }
.circle-btn.small { width: 30px; height: 30px; margin: 0 0 0 -1px; }

.chat-meta { display: flex; align-items: center; gap: 9px; margin-top: 21px; padding-left: 1px; }
.pill {
  width: 53px;
  height: 32px;
  border-radius: 14px;
  background: #f9f9fa;
  color: #23272f;
  display: flex;
  align-items: center;
  gap: 5px;
  padding-left: 9px;
}
.checks { margin-left: auto; display: flex; align-items: center; gap: 12px; }
.tick { color: #1a8457; stroke-width: 1.5; }

.messages { padding: 18px 20px 0; }
.msg { display: flex; align-items: flex-start; gap: 11px; }
.msg > .avatar { margin-top: 4px; }
.msg.mine { justify-content: flex-end; gap: 9px; margin-top: 19px; margin-right: -1px; }
.msg.mine > .avatar { margin-top: 2px; }
.msg.third { margin-top: 36px; }
.msg.third > .avatar { margin-top: 0; }

.bubble {
  position: relative;
  display: flex;
  flex-direction: column;
  gap: 10px;
  padding: 16px;
  border-radius: 14px;
}
.b-in { width: 309px; background: #f9f9fb; }
.h84 { height: 84px; }
.h70 { height: 70px; }
.b-out { width: 262px; height: 58px; padding: 17px 15px; gap: 10.5px; background: #ebf2ec; }
.react-btn {
  position: absolute;
  right: 8px;
  bottom: -18px;
  width: 24px;
  height: 24px;
  border-radius: 50%;
  background: #fff;
  border: 1px solid #f0f1f2;
  color: #23272f;
  display: flex;
  align-items: center;
  justify-content: center;
}
.reply-btn {
  position: absolute;
  right: 8px;
  bottom: -18px;
  width: 21px;
  height: 21px;
  border-radius: 50%;
  background: #0f6fe3;
  color: #fff;
  display: flex;
  align-items: center;
  justify-content: center;
}
.react-chip {
  width: 50px;
  height: 20px;
  margin: 2px 0 0 1px;
  background: #fafafb;
  border-radius: 8px;
  display: flex;
  align-items: center;
  gap: 5px;
  padding-left: 7px;
}

.jump { display: flex; align-items: center; gap: 9px; margin-top: 14px; padding-left: 1px; }
.jump-line { flex: 1; border-top: 2px dotted #d9dbdf; margin-bottom: 4px; }
.jump-line.short { flex: none; width: 186px; }
.jump-btn {
  width: 30px;
  height: 30px;
  border-radius: 50%;
  background: #07432f;
  color: #fff;
  display: flex;
  align-items: center;
  justify-content: center;
}

.composer {
  margin: auto 9px 24px 10px;
  height: 196px;
  padding: 14px 10px 0;
  border: 1px solid #f1f2f3;
  border-radius: 14px;
  background: #fff;
}
.composer-tabs { display: flex; gap: 7px; margin-left: -1px; }
.ctab {
  width: 49px;
  height: 32px;
  border-radius: 12px;
  color: #23272f;
  display: flex;
  align-items: center;
  justify-content: center;
}
.ctab.on { background: #eef3f0; color: #0d3d2c; }
.field {
  height: 88px;
  margin-top: 6px;
  padding: 17px 12px;
  border: 1px solid #f1f2f3;
  border-radius: 14px;
  display: flex;
  flex-direction: column;
  gap: 12px;
}
.composer-foot { display: flex; align-items: center; gap: 21.500px; height: 36px; margin-top: 6px; padding-left: 4px; }
.send {
  margin-left: auto;
  margin-right: 2px;
  width: 87px;
  height: 36px;
  border-radius: 12px;
  background: #07432f;
  color: #fff;
  display: flex;
  align-items: center;
}
.send-main {
  width: 54px;
  height: 22px;
  border-right: 1px solid #3b6b59;
  display: flex;
  align-items: center;
  justify-content: center;
}
.send-more { flex: 1; display: flex; justify-content: center; }

/* details column */
.details {
  width: 295px;
  flex: none;
  display: flex;
  flex-direction: column;
  gap: 10px;
  padding: 23px 14px 0;
  background: #fbfbfc;
}
.card { background: #fff; border: 1px solid #f4f4f6; border-radius: 14px; }
.filter-card {
  height: 38px;
  display: flex;
  align-items: center;
  justify-content: space-between;
  padding: 0 15px 0 9px;
}
.filter-pill {
  width: 140px;
  height: 24px;
  border-radius: 12px;
  background: #f7f7f8;
  display: flex;
  align-items: center;
  gap: 5px;
  padding-left: 4px;
}
.filter-pill .bar.slate { margin-left: 7px; }

.info-card { height: 218px; padding: 13px 10px 0; }
.info-block { display: flex; gap: 13px; height: 93px; border-bottom: 1px solid #f4f5f6; }
.info-block.second { padding-top: 16px; border-bottom: 0; height: auto; }
.big-tile {
  width: 47px;
  height: 48px;
  border-radius: 10px;
  background: #eef2f0;
  color: #0d3d2c;
  display: flex;
  align-items: center;
  justify-content: center;
  flex: none;
}
.info-text { padding-top: 9px; gap: 10px; }
.mini-row { display: flex; gap: 6px; margin: 9px 0 0 -3px; }
.mini {
  width: 27px;
  height: 27px;
  border-radius: 50%;
  background: #f6f6f7;
  color: #2b2f38;
  display: flex;
  align-items: center;
  justify-content: center;
}

.card-title { display: flex; align-items: center; gap: 5px; height: 14px; }
.chart-card { height: 150px; padding: 15px 0 0 13px; }
.chart { width: 235px; height: 72px; margin: 9px 0 0 1px; overflow: visible; }
.chart-area { stroke: none; }
.chart-line { stroke: #2a9763; stroke-width: 2; }
.chart-mark { fill: #bcd8c9; stroke: none; }
.legend { display: flex; margin: 11px 0 0 1px; }
.legend-item { width: 62px; display: flex; align-items: center; gap: 4px; }
.legend-item:nth-child(3) { width: 55px; }
.mark { width: 10px; height: 10px; border-radius: 50%; }

.tags-card { height: 95px; padding: 19px 0 0 13px; }
.chips { display: flex; align-items: center; gap: 8px; margin: 15px 0 0 1px; }
.chip {
  height: 29px;
  border-radius: 15px;
  display: flex;
  align-items: center;
  justify-content: center;
}
.chip i { height: 5px; border-radius: 3px; }
.c-green { background: #d5e8dc; }
.c-green i { background: #7ab594; }
.c-blue { background: #d9e6fa; }
.c-blue i { background: #3b82e6; }
.c-orange { background: #fde8cf; }
.c-orange i { background: #ff9f1c; }
.c-purple { background: #e3dcf1; }
.c-purple i { background: #7a5fc0; }
.chip-add {
  width: 27px;
  height: 27px;
  border-radius: 50%;
  background: #f6f6f7;
  color: #4a4f59;
  display: flex;
  align-items: center;
  justify-content: center;
}

.goal-card { height: 191px; padding: 12px 10px 0; }
.goal-head { display: flex; gap: 13px; }
.goal-text { padding-top: 8px; gap: 9px; }
.progress {
  width: 223px;
  height: 8px;
  margin: 26px 0 0 12px;
  border-radius: 4px;
  background: #eeeff0;
  display: flex;
  align-items: center;
}
.goal-head + .progress { margin-top: 23px; }
.fill { height: 10px; border-radius: 5px; flex: none; }
```
